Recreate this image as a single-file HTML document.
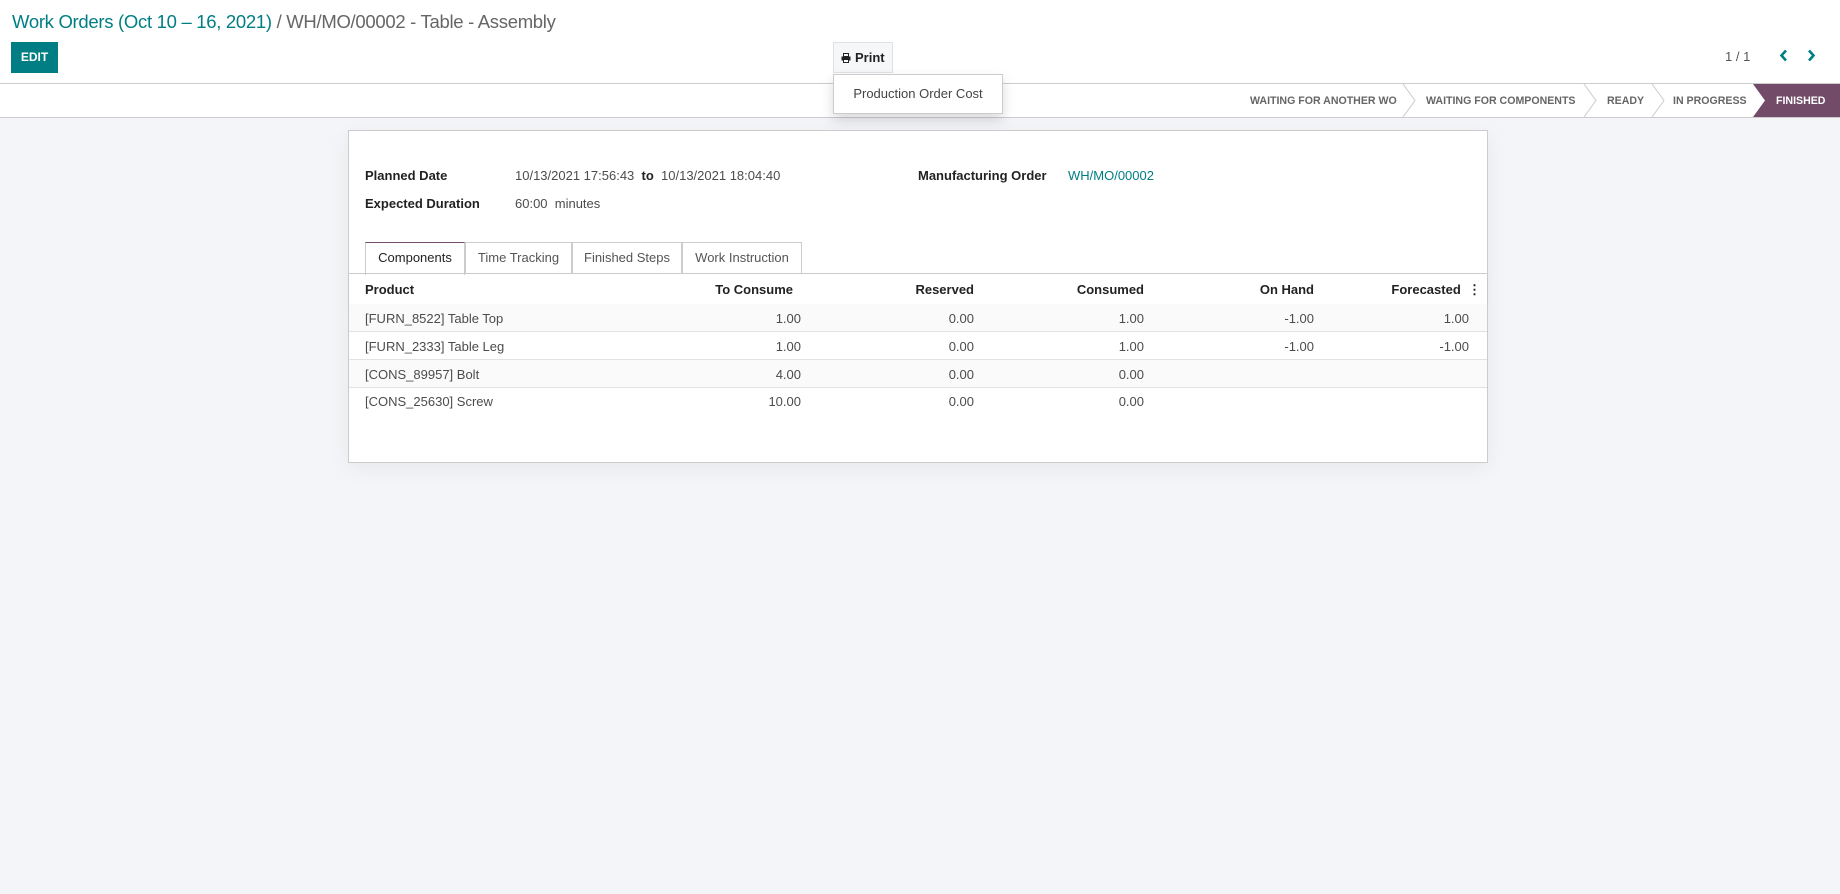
<!DOCTYPE html>
<html><head><meta charset="utf-8"><style>
*{box-sizing:border-box;margin:0;padding:0}
body{width:1840px;height:894px;overflow:hidden;background:#f4f5f8;font-family:"Liberation Sans",Arial,sans-serif;font-size:13px;color:#4c4c4c;position:relative}
.top{position:absolute;left:0;top:0;width:1840px;height:84px;background:#fff;border-bottom:1px solid #ccc}
.title{position:absolute;left:12px;top:11px;font-size:18.5px;color:#666;letter-spacing:-0.3px}
.title a{color:#017e84}
.edit{position:absolute;left:11px;top:42px;width:47px;height:31px;background:#017e84;color:#fff;font-weight:bold;font-size:12px;line-height:31px;text-align:center}
.print{position:absolute;left:833px;top:42px;width:60px;height:31px;background:#f6f7f9;border:1px solid #dee2e6;color:#222;font-weight:bold;line-height:29px;text-align:center}
.pager{position:absolute;left:1725px;top:49px;color:#555}
.status{position:absolute;left:0;top:84px;width:1840px;height:34px;background:#fff;border-bottom:1px solid #ccc}
.st{position:absolute;top:11px;font-size:10.6px;color:#666;font-weight:bold;white-space:nowrap}
.fin{position:absolute;left:1753px;top:0;width:87px;height:33px;background:#714b67}
.drop{position:absolute;left:833px;top:74px;width:170px;height:40px;background:#fff;border:1px solid #ccc;box-shadow:0 6px 12px rgba(0,0,0,.15);line-height:38px;text-align:center;color:#444;z-index:5}
.sheet{position:absolute;left:348px;top:130px;width:1140px;height:333px;background:#fff;border:1px solid #ccc;box-shadow:0 5px 20px rgba(0,0,0,.06)}
.lbl{position:absolute;font-weight:bold;color:#222}
.val{position:absolute;color:#4c4c4c}
.tab{position:absolute;top:111px;height:32px;border:1px solid #ccc;border-bottom:none;line-height:30px;text-align:center;color:#555;background:#fff}
.row{position:absolute;left:0;width:1138px;border-bottom:1px solid #e2e2e2}
.c{position:absolute;top:0;white-space:nowrap}
.r{text-align:right}
</style></head><body>
<div class="top">
<div class="title"><a>Work Orders (Oct 10 – 16, 2021)</a> / WH/MO/00002 - Table - Assembly</div>
<div class="edit">EDIT</div>
<div class="print"><svg width="10" height="10" viewBox="0 0 10 10" style="vertical-align:-1px"><rect x="2.5" y="0.5" width="5" height="3" fill="none" stroke="#222"/><rect x="0.5" y="3.5" width="9" height="4" fill="#222"/><rect x="2.5" y="6.5" width="5" height="3" fill="#fff" stroke="#222"/></svg> Print</div>
<div class="pager">1 / 1</div>
<svg style="position:absolute;left:1779px;top:49px" width="10" height="13"><path d="M7 1.5 L2.5 6.5 L7 11.5" fill="none" stroke="#017e84" stroke-width="2.6"/></svg>
<svg style="position:absolute;left:1806px;top:49px" width="10" height="13"><path d="M3 1.5 L7.5 6.5 L3 11.5" fill="none" stroke="#017e84" stroke-width="2.6"/></svg>
</div>
<div class="drop">Production Order Cost</div>
<div class="status">
<svg style="position:absolute;left:0;top:0" width="1840" height="33"><g fill="none" stroke="#ccc"><path d="M1403 0 L1415 16.5 L1403 33"/><path d="M1584 0 L1596 16.5 L1584 33"/><path d="M1652 0 L1664 16.5 L1652 33"/></g></svg>
<div class="fin"></div>
<svg style="position:absolute;left:1753px;top:0" width="13" height="33"><path d="M0 0 L12 16.5 L0 33 Z" fill="#fff"/></svg>
<div class="st" style="left:1250px">WAITING FOR ANOTHER WO</div>
<div class="st" style="left:1426px">WAITING FOR COMPONENTS</div>
<div class="st" style="left:1607px">READY</div>
<div class="st" style="left:1673px">IN PROGRESS</div>
<div class="st" style="left:1776px;color:#fff">FINISHED</div>
</div>
<div class="sheet">
<div class="lbl" style="left:16px;top:37px">Planned Date</div>
<div class="val" style="left:166px;top:37px">10/13/2021 17:56:43 &nbsp;<b style="color:#222">to</b>&nbsp; 10/13/2021 18:04:40</div>
<div class="lbl" style="left:569px;top:37px">Manufacturing Order</div>
<div class="val" style="left:719px;top:37px;color:#017e84">WH/MO/00002</div>
<div class="lbl" style="left:16px;top:65px">Expected Duration</div>
<div class="val" style="left:166px;top:65px">60:00 &nbsp;minutes</div>
<div class="tab" style="left:16px;width:100px;border-top:1px solid #714b67;color:#222;height:33px">Components</div>
<div class="tab" style="left:116px;width:107px">Time Tracking</div>
<div class="tab" style="left:223px;width:110px">Finished Steps</div>
<div class="tab" style="left:333px;width:120px">Work Instruction</div>
<div style="position:absolute;left:0;top:142px;width:1138px;border-top:1px solid #ccc"></div>
<div class="row" style="top:143px;height:30px;font-weight:bold;color:#222;box-shadow:0 2px 4px rgba(0,0,0,.05);border:none">
<div class="c" style="left:16px;top:8px">Product</div>
<div class="c r" style="right:694px;top:8px">To Consume</div>
<div class="c r" style="right:513px;top:8px">Reserved</div>
<div class="c r" style="right:343px;top:8px">Consumed</div>
<div class="c r" style="right:173px;top:8px">On Hand</div>
<div class="c r" style="right:6px;top:8px">Forecasted &nbsp;⋮</div>
</div>
<div class="row" style="top:173px;height:28px;background:#fafafa"><div class="c" style="left:16px;top:7px">[FURN_8522] Table Top</div><div class="c" style="right:686px;top:7px">1.00</div><div class="c" style="right:513px;top:7px">0.00</div><div class="c" style="right:343px;top:7px">1.00</div><div class="c" style="right:173px;top:7px">-1.00</div><div class="c" style="right:18px;top:7px">1.00</div></div>
<div class="row" style="top:201px;height:28px"><div class="c" style="left:16px;top:7px">[FURN_2333] Table Leg</div><div class="c" style="right:686px;top:7px">1.00</div><div class="c" style="right:513px;top:7px">0.00</div><div class="c" style="right:343px;top:7px">1.00</div><div class="c" style="right:173px;top:7px">-1.00</div><div class="c" style="right:18px;top:7px">-1.00</div></div>
<div class="row" style="top:229px;height:28px;background:#fafafa"><div class="c" style="left:16px;top:7px">[CONS_89957] Bolt</div><div class="c" style="right:686px;top:7px">4.00</div><div class="c" style="right:513px;top:7px">0.00</div><div class="c" style="right:343px;top:7px">0.00</div></div>
<div class="row" style="top:257px;height:28px;border:none"><div class="c" style="left:16px;top:6px">[CONS_25630] Screw</div><div class="c" style="right:686px;top:6px">10.00</div><div class="c" style="right:513px;top:6px">0.00</div><div class="c" style="right:343px;top:6px">0.00</div></div>
</div>
</body></html>
